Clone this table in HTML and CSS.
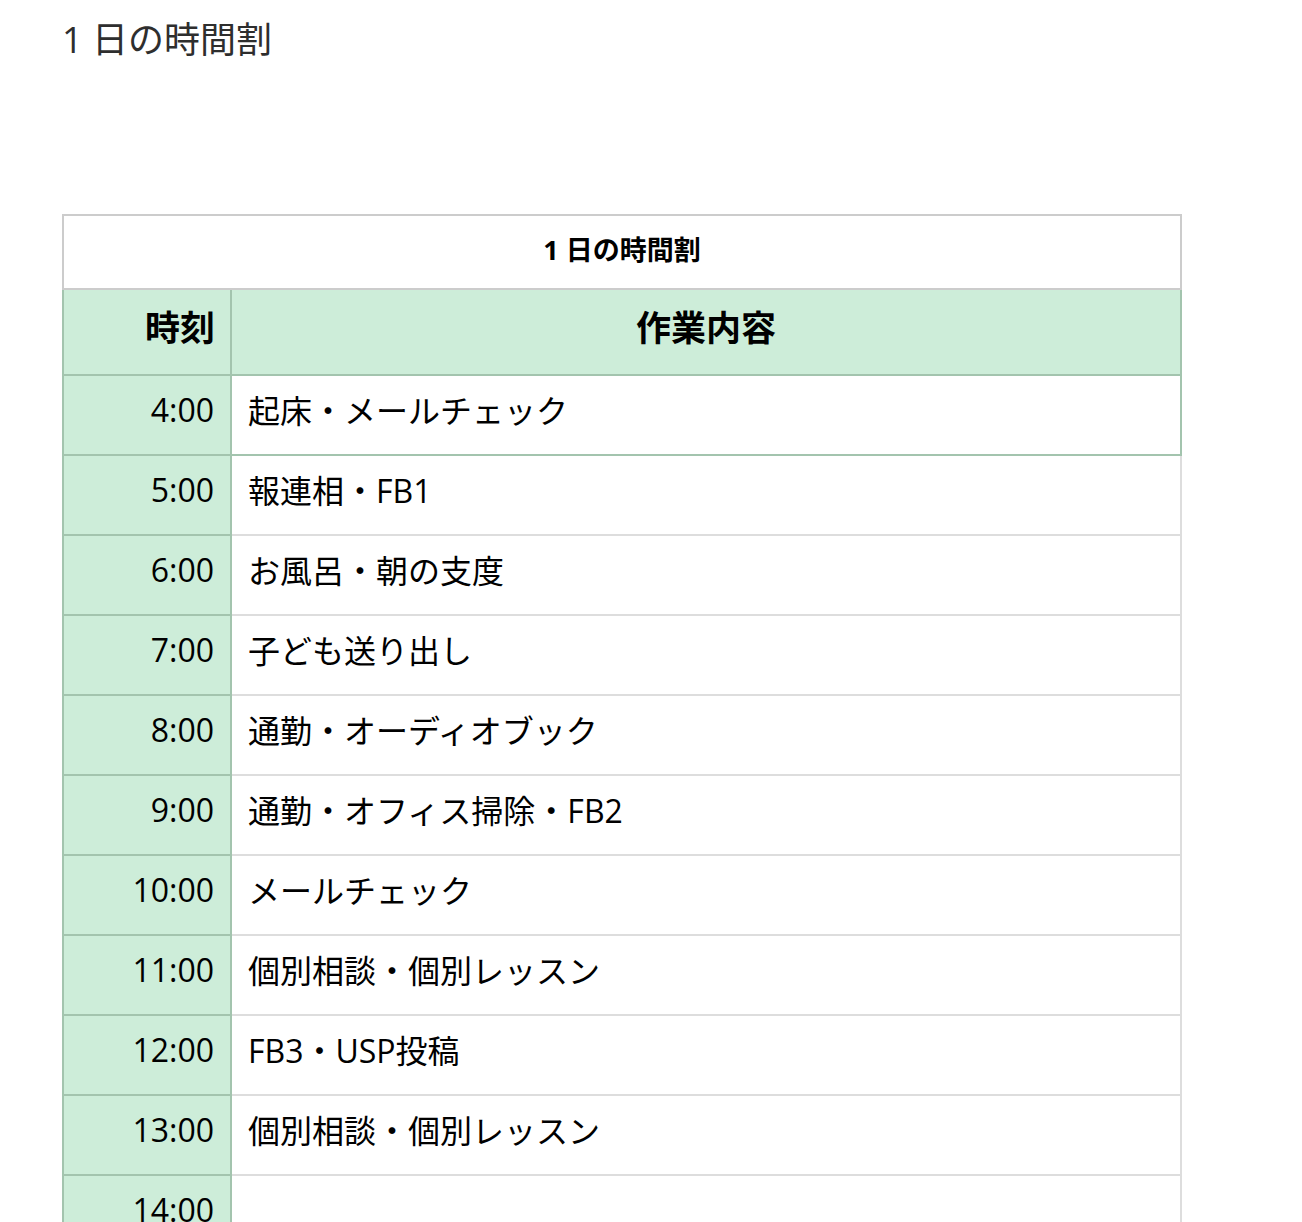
FILE: index.html
```html
<!DOCTYPE html>
<html lang="ja">
<head>
<meta charset="utf-8">
<title>1日の時間割</title>
<link rel="stylesheet" href="styles.css">
</head>
<body>
<div class="page">
  <h1 class="title">1 日の時間割</h1>
  <table class="schedule">
    <thead>
      <tr><th class="caption" colspan="2">1 日の時間割</th></tr>
      <tr><th class="head head-time">時刻</th><th class="head head-task">作業内容</th></tr>
    </thead>
    <tbody>
      <tr class="first"><td class="time">4:00</td><td class="task">起床・メールチェック</td></tr>
      <tr><td class="time">5:00</td><td class="task">報連相・FB1</td></tr>
      <tr><td class="time">6:00</td><td class="task">お風呂・朝の支度</td></tr>
      <tr><td class="time">7:00</td><td class="task">子ども送り出し</td></tr>
      <tr><td class="time">8:00</td><td class="task">通勤・オーディオブック</td></tr>
      <tr><td class="time">9:00</td><td class="task">通勤・オフィス掃除・FB2</td></tr>
      <tr><td class="time">10:00</td><td class="task">メールチェック</td></tr>
      <tr><td class="time">11:00</td><td class="task">個別相談・個別レッスン</td></tr>
      <tr><td class="time">12:00</td><td class="task">FB3・USP投稿</td></tr>
      <tr><td class="time">13:00</td><td class="task">個別相談・個別レッスン</td></tr>
      <tr><td class="time">14:00</td><td class="task"></td></tr>
    </tbody>
  </table>
</div>
</body>
</html>
```

FILE: styles.css
```css
html, body {
  margin: 0;
  padding: 0;
  background: #fff;
}

body {
  font-family: "Open Sans", "Noto Sans CJK JP", sans-serif;
  color: #000;
}

.page {
  padding: 18px 0 0 62px;
}

.title {
  margin: 0;
  font-size: 36px;
  line-height: 43px;
  font-weight: normal;
  color: #2e2e2e;
}

.schedule {
  margin-top: 153px;
  width: 1120px;
  border-collapse: collapse;
}

.caption {
  height: 64px;
  padding: 0 0 8px;
  border: 2px solid #cccccc;
  font-size: 27px;
  font-weight: bold;
  text-align: center;
  vertical-align: middle;
  background: #fff;
}

.head {
  height: 70px;
  padding: 0 0 14px;
  font-size: 35px;
  font-weight: bold;
  background: #cdedd9;
  border: 2px solid #a3c4ae;
  vertical-align: middle;
}

.head-time {
  width: 151px;
  text-align: right;
  padding-right: 15px;
}

.head-task {
  text-align: center;
}

td {
  height: 66px;
  font-size: 32px;
  vertical-align: middle;
  padding: 0 0 12px;
}

.time {
  text-align: right;
  padding-right: 16px;
  background: #cdedd9;
  border: 2px solid #a3c4ae;
}

.task {
  text-align: left;
  padding-left: 16px;
  border: 2px solid #dddddd;
  background: #fff;
}

.first .task {
  border-color: #a3c4ae;
}
```
